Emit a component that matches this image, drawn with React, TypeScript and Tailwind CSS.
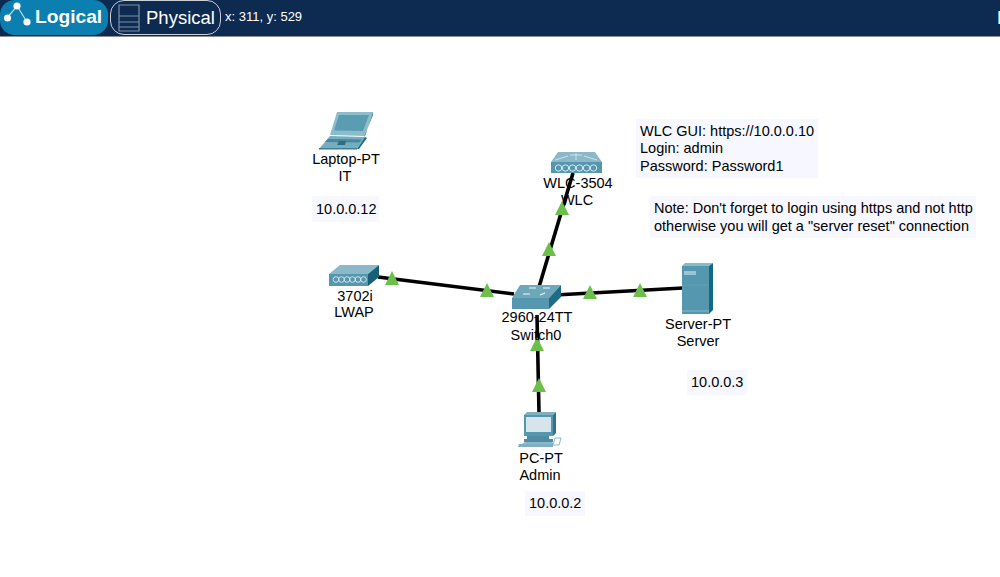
const labels = [
  { x: 346, y: 151, text: "Laptop-PT" },
  { x: 345, y: 168, text: "IT" },
  { x: 578, y: 175, text: "WLC-3504" },
  { x: 577, y: 192, text: "WLC" },
  { x: 355, y: 288, text: "3702i" },
  { x: 354, y: 304, text: "LWAP" },
  { x: 537, y: 309, text: "2960-24TT" },
  { x: 536, y: 327, text: "Switch0" },
  { x: 698, y: 316, text: "Server-PT" },
  { x: 698, y: 333, text: "Server" },
  { x: 541, y: 450, text: "PC-PT" },
  { x: 540, y: 467, text: "Admin" },
];

const notes = [
  { x: 312, y: 196, w: 67, h: 26, lines: ["10.0.0.12"] },
  { x: 687, y: 370, w: 60, h: 25, lines: ["10.0.0.3"] },
  { x: 525, y: 491, w: 60, h: 25, lines: ["10.0.0.2"] },
  { x: 636, y: 119, w: 182, h: 59, lines: ["WLC GUI: https://10.0.0.10", "Login: admin", "Password: Password1"] },
  { x: 650, y: 196, w: 326, h: 42, lines: ['Note: Don\'t forget to login using https and not http', 'otherwise you will get a "server reset" connection'] },
];

const links = [
  [573, 173, 539, 287],
  [378, 277, 514, 294],
  [555, 295, 683, 288],
  [537, 315, 539, 413],
];

const arrows = [
  [392, 279],
  [487, 291],
  [562, 209],
  [549, 250],
  [590, 293],
  [640, 291],
  [537, 345],
  [539, 386],
];

function Diagram() {
  return (
    <svg className="absolute left-0 top-0" width="1000" height="577" viewBox="0 0 1000 577">
      {links.map(([a, b, c, d], i) => (
        <line key={i} x1={a} y1={b} x2={c} y2={d} stroke="#000" strokeWidth="3.6" />
      ))}

      {/* laptop */}
      <path d="M337 112h36l-8 24-35-1z" fill="#8dbccb" />
      <path d="M339 115h30l-6 16-29-.5z" fill="#5a9cb2" />
      <path d="M373 112l-8 24-1 1 9-22z" fill="#2c7388" />
      <path d="M330 136l35 1-8 12h-38z" fill="#76adbf" />
      <path d="M328 139l34 .5-3 3-34-.5z" fill="#47869c" />
      <path d="M339 141h7l-1 4h-8z" fill="#2f6d83" />
      <path d="M365 137l2 1-8 11h-2z" fill="#1d6b84" />
      <path d="M319 148h38v1.5h-38z" fill="#3f7f95" />

      {/* wlc */}
      <path d="M558 152h37l7 10h-51z" fill="#8cb9c9" />
      <path d="M551 162h51v11h-51z" fill="#5597ae" />
      <path d="M555 160l13-4M597 160l-13-4M576 153v7M570 155h12" stroke="#e8f2f5" strokeWidth="0.7" fill="none" />
      {[558.5, 565.5, 572.5, 579.5, 586.5, 593.5].map((x) => (
        <circle key={x} cx={x} cy={168} r="3.2" fill="none" stroke="#e8f2f5" strokeWidth="0.9" />
      ))}

      {/* lwap */}
      <path d="M340 265h39l-11 9h-39z" fill="#8cb9c9" />
      <path d="M329 274h39v12h-39z" fill="#5597ae" />
      <path d="M368 274l11-9v12l-11 9z" fill="#165f78" />
      {[336, 341.5, 347, 352.5, 358, 363.5].map((x) => (
        <circle key={x} cx={x} cy={279.5} r="2.8" fill="none" stroke="#dcebf0" strokeWidth="0.9" />
      ))}

      {/* switch */}
      <path d="M520 285h41l-12 13h-37z" fill="#6ea7ba" />
      <path d="M512 298h37v11h-37z" fill="#5597ae" />
      <path d="M549 298l12-13v12l-12 12z" fill="#1d6b84" />
      <path d="M529 288h7M543 288h7M523 294h7M545 293l-5 2" stroke="#f2f7f9" strokeWidth="1.2" fill="none" />

      {/* server */}
      <path d="M685 263h28l-4 3h-27z" fill="#8cb9c9" />
      <path d="M682 266h27v48h-27z" fill="#5597ae" />
      <path d="M709 266l4-3v47l-4 4z" fill="#0f6a85" />
      <path d="M684 271h12v4h-12z" fill="#9cc4d1" />
      <path d="M682 285h27" stroke="#6aa6ba" strokeWidth="0.7" />
      <path d="M682 311h27" stroke="#8cb9c9" strokeWidth="1" />

      {/* pc */}
      <path d="M527 412h29l-3 3h-29z" fill="#7fb0c1" />
      <path d="M524 415h29v21h-29z" fill="#5597ae" />
      <path d="M553 415l3-3v21l-3 3z" fill="#2c7388" />
      <path d="M526 417h25v15h-25z" fill="#d5e5eb" />
      <path d="M527 436h22v3h-22zM524 439h29v3h-29z" fill="#4f8ca3" />
      <path d="M525 442h27l1 1v1h-31z" fill="#8cb9c9" />
      <path d="M519 444h34v3h-35z" fill="#7fb0c1" />
      <path d="M555 438h6l-2 7h-6z" fill="none" stroke="#8cb9c9" strokeWidth="1" />

      {arrows.map(([x, y]) => (
        <path key={`${x}-${y}`} d={`M${x} ${y - 8}l7 14h-14z`} fill="#6cbf4b" />
      ))}
    </svg>
  );
}

export default function App() {
  return (
    <div className="relative h-[577px] w-[1000px] overflow-hidden bg-white font-['Liberation_Sans',Arial,sans-serif]">
      <header className="flex h-[37px] items-start gap-[2px] border-b border-b-[#8a8f96] bg-[#0d2a50] text-white">
        <button className="flex h-[35px] w-[108px] items-center rounded-[14px] border border-[#0a7fb0] bg-[#0a7fb0] pl-[3px] text-[19.2px] font-bold">
          <svg width="30" height="33" viewBox="0 0 30 33" className="shrink-0">
            <path d="M3 17L13 5L23 21" stroke="#b9dbe8" strokeWidth="1.2" fill="none" />
            <circle cx="3.5" cy="17" r="3.6" fill="#fff" />
            <circle cx="13" cy="5" r="3.6" fill="#fff" />
            <circle cx="23" cy="21" r="3.6" fill="#fff" />
          </svg>
          <span className="ml-[1px]">Logical</span>
        </button>
        <button className="flex h-[35px] w-[111px] items-center rounded-[14px] border border-[#c9d0d8] pl-[7px] text-[18.5px]">
          <svg width="22" height="28" viewBox="0 0 22 28" className="shrink-0">
            <path d="M1 1h20v26H1zM1 12h20M1 18h20M1 23h20" stroke="#7f8fa6" strokeWidth="1.2" fill="none" />
          </svg>
          <span className="ml-[6px]">Physical</span>
        </button>
        <span className="ml-[2px] mt-[9px] text-[13px] leading-[15px]">x: 311, y: 529</span>
      </header>

      <Diagram />

      {notes.map((n) => (
        <div
          key={n.lines[0]}
          className="absolute flex flex-col justify-center bg-[#f7f8ff] px-[4px] pt-[1px] text-[14.5px] leading-[17.6px] whitespace-nowrap text-black"
          style={{ left: n.x, top: n.y, width: n.w, height: n.h }}
        >
          {n.lines.map((l) => (
            <div key={l}>{l}</div>
          ))}
        </div>
      ))}

      {labels.map((l) => (
        <div
          key={l.text}
          className="absolute -translate-x-1/2 text-[14.5px] leading-[17px] whitespace-nowrap text-black"
          style={{ left: l.x, top: l.y }}
        >
          {l.text}
        </div>
      ))}

      <span className="absolute left-[997px] top-[8px] text-[18px] leading-[20px] text-white">F</span>
    </div>
  );
}
